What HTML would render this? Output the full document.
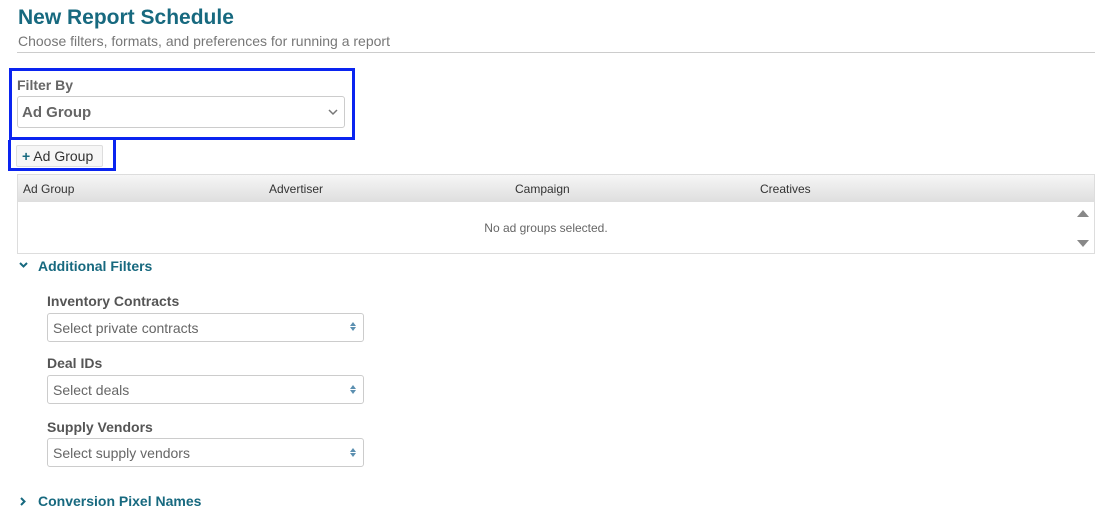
<!DOCTYPE html><html><head><style>
body{margin:0;width:1109px;height:518px;background:#fff;font-family:"Liberation Sans",sans-serif;position:relative;overflow:hidden}
.a{position:absolute}
.t{color:#17697f;font-weight:bold}
.sel{position:absolute;border:1px solid #ccc;border-radius:3px;background:#fff;box-sizing:border-box;color:#666;font-size:14px}
.lab{position:absolute;font-size:14px;font-weight:bold;color:#555}
</style></head><body>
<div class="a t" style="left:18px;top:6px;font-size:21px">New Report Schedule</div>
<div class="a" style="left:18px;top:33px;font-size:14px;color:#777">Choose filters, formats, and preferences for running a report</div>
<div class="a" style="left:17px;top:52px;width:1078px;height:1px;background:#ccc"></div>
<div class="a" style="left:9px;top:68px;width:340px;height:66px;border:3px solid #0a24f0"></div>
<div class="lab" style="left:17px;top:77px;color:#666">Filter By</div>
<div class="sel" style="left:17px;top:96px;width:328px;height:32px;padding:7px 4px;font-weight:bold;font-size:15px">Ad Group
<svg class="a" style="right:6px;top:12px" width="10" height="7" viewBox="0 0 10 7"><path d="M1 1l4 4 4-4" stroke="#777" stroke-width="1.5" fill="none"/></svg></div>
<div class="a" style="left:8px;top:140px;width:102px;height:28px;border:3px solid #0a24f0;border-top:none"></div>
<div class="a" style="left:16px;top:145px;width:87px;height:22px;border:1px solid #ddd;border-radius:2px;background:#f6f6f6;box-sizing:border-box;font-size:14px;color:#333;padding:2px 5px"><b style="color:#17697f">+</b> Ad Group</div>
<div class="a" style="left:17px;top:174px;width:1078px;height:80px;border:1px solid #ddd;box-sizing:border-box">
<div style="height:27px;background:linear-gradient(#f6f6f6,#dedede);font-size:12px;color:#333;position:relative">
<span class="a" style="left:5px;top:7px">Ad Group</span><span class="a" style="left:251px;top:7px">Advertiser</span><span class="a" style="left:497px;top:7px">Campaign</span><span class="a" style="left:742px;top:7px">Creatives</span></div>
<div class="a" style="left:0;right:20px;top:46px;text-align:center;font-size:12px;color:#666">No ad groups selected.</div>
<svg class="a" style="right:5px;top:34px" width="12" height="8"><path d="M0 8L6 1 12 8z" fill="#888"/></svg>
<svg class="a" style="right:5px;top:65px" width="12" height="8"><path d="M0 0L6 7 12 0z" fill="#888"/></svg>
</div>
<svg class="a" style="left:19px;top:262px" width="9" height="7"><path d="M1 1l3.5 3.5L8 1" stroke="#17697f" stroke-width="2" fill="none"/></svg>
<div class="a t" style="left:38px;top:258px;font-size:14px">Additional Filters</div>
<div class="lab" style="left:47px;top:293px">Inventory Contracts</div>
<div class="sel" style="left:47px;top:313px;width:317px;height:29px;padding:6px 5px">Select private contracts</div>
<div class="lab" style="left:47px;top:355px">Deal IDs</div>
<div class="sel" style="left:47px;top:375px;width:317px;height:29px;padding:6px 5px">Select deals</div>
<div class="lab" style="left:47px;top:419px">Supply Vendors</div>
<div class="sel" style="left:47px;top:438px;width:317px;height:29px;padding:6px 5px">Select supply vendors</div>
<svg class="a" style="left:350px;top:322px" width="6" height="9"><path d="M0 4L3 0 6 4zM0 5L3 9 6 5z" fill="#5b8fb0"/></svg>
<svg class="a" style="left:350px;top:385px" width="6" height="9"><path d="M0 4L3 0 6 4zM0 5L3 9 6 5z" fill="#5b8fb0"/></svg>
<svg class="a" style="left:350px;top:448px" width="6" height="9"><path d="M0 4L3 0 6 4zM0 5L3 9 6 5z" fill="#5b8fb0"/></svg>
<svg class="a" style="left:20px;top:497px" width="7" height="9"><path d="M1 1l3.5 3.5L1 8" stroke="#17697f" stroke-width="2" fill="none"/></svg>
<div class="a t" style="left:38px;top:493px;font-size:14px">Conversion Pixel Names</div>
</body></html>
